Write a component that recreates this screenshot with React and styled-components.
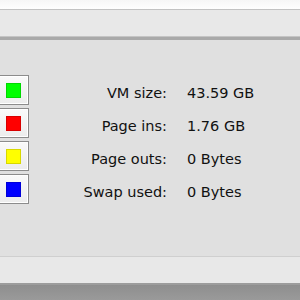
import styled, { createGlobalStyle } from "styled-components";

const GlobalStyle = createGlobalStyle`
	html, body {
		margin: 0;
		padding: 0;
		width: 300px;
		height: 300px;
		overflow: hidden;
		background: #969696;
	}
`;

const stats = [
	{ label: "VM size:", value: "43.59 GB", color: "#00ff00", edge: "#00d800" },
	{ label: "Page ins:", value: "1.76 GB", color: "#ff0000", edge: "#d80000" },
	{ label: "Page outs:", value: "0 Bytes", color: "#ffff00", edge: "#d8d800" },
	{ label: "Swap used:", value: "0 Bytes", color: "#0000ff", edge: "#0000d8" },
];

export default function App() {
	return (
		<Window>
			<GlobalStyle />
			<TopStrip />
			<Toolbar />
			<Panel>
				<StatGrid>
					{stats.map((s) => (
						<StatRow key={s.label}>
							<Swatch>
								<Chip $color={s.color} $edge={s.edge} />
							</Swatch>
							<Label>{s.label}</Label>
							<Value>{s.value}</Value>
						</StatRow>
					))}
				</StatGrid>
			</Panel>
			<Footer />
			<Desk />
		</Window>
	);
}

const Window = styled.div`
	width: 300px;
	height: 300px;
	display: flex;
	flex-direction: column;
	background: #e0e0e0;
`;

const TopStrip = styled.div`
	height: 9px;
	background: linear-gradient(#f6f6f6, #fefefe);
	border-bottom: 1px solid #c2c2c2;
`;

const Toolbar = styled.div`
	height: 27px;
	background: #e8e8e8;
	border-bottom: 3px solid #a9a9a9;
	box-shadow: inset 0 -1px 0 #c4c4c4;
`;

const Panel = styled.div`
	flex: 1;
	background: #e0e0e0;
	padding-top: 35px;
	border-bottom: 1px solid #cfcfcf;
`;

const StatGrid = styled.div`
	display: flex;
	flex-direction: column;
	gap: 3px;
`;

const StatRow = styled.div`
	display: grid;
	grid-template-columns: 33px 138px 1fr;
	align-items: center;
	height: 30px;
	margin-left: -4px;
`;

const Swatch = styled.div`
	box-sizing: border-box;
	width: 33px;
	height: 30px;
	border: 1px solid #8c8c8c;
	background: linear-gradient(#fafafa, #ececec);
	box-shadow: inset 0 0 0 1px #ffffff;
	display: flex;
	align-items: center;
	justify-content: center;
	padding-left: 2px;
`;

const Chip = styled.div`
	box-sizing: border-box;
	width: 15px;
	height: 15px;
	background: ${(p) => p.$color};
	border: 1px solid ${(p) => p.$edge};
`;

const Label = styled.span`
	font-family: "DejaVu Sans", sans-serif;
	font-size: 14.5px;
	color: #111;
	text-align: right;
	padding-top: 6px;
`;

const Value = styled.span`
	font-family: "DejaVu Sans", sans-serif;
	font-size: 14.5px;
	color: #111;
	padding-left: 20px;
	padding-top: 6px;
`;

const Footer = styled.div`
	height: 26px;
	background: #e8e8e8;
	border-bottom: 2px solid #9c9c9c;
`;

const Desk = styled.div`
	height: 15px;
	background: linear-gradient(#8e8e8e, #9a9a9a);
`;
